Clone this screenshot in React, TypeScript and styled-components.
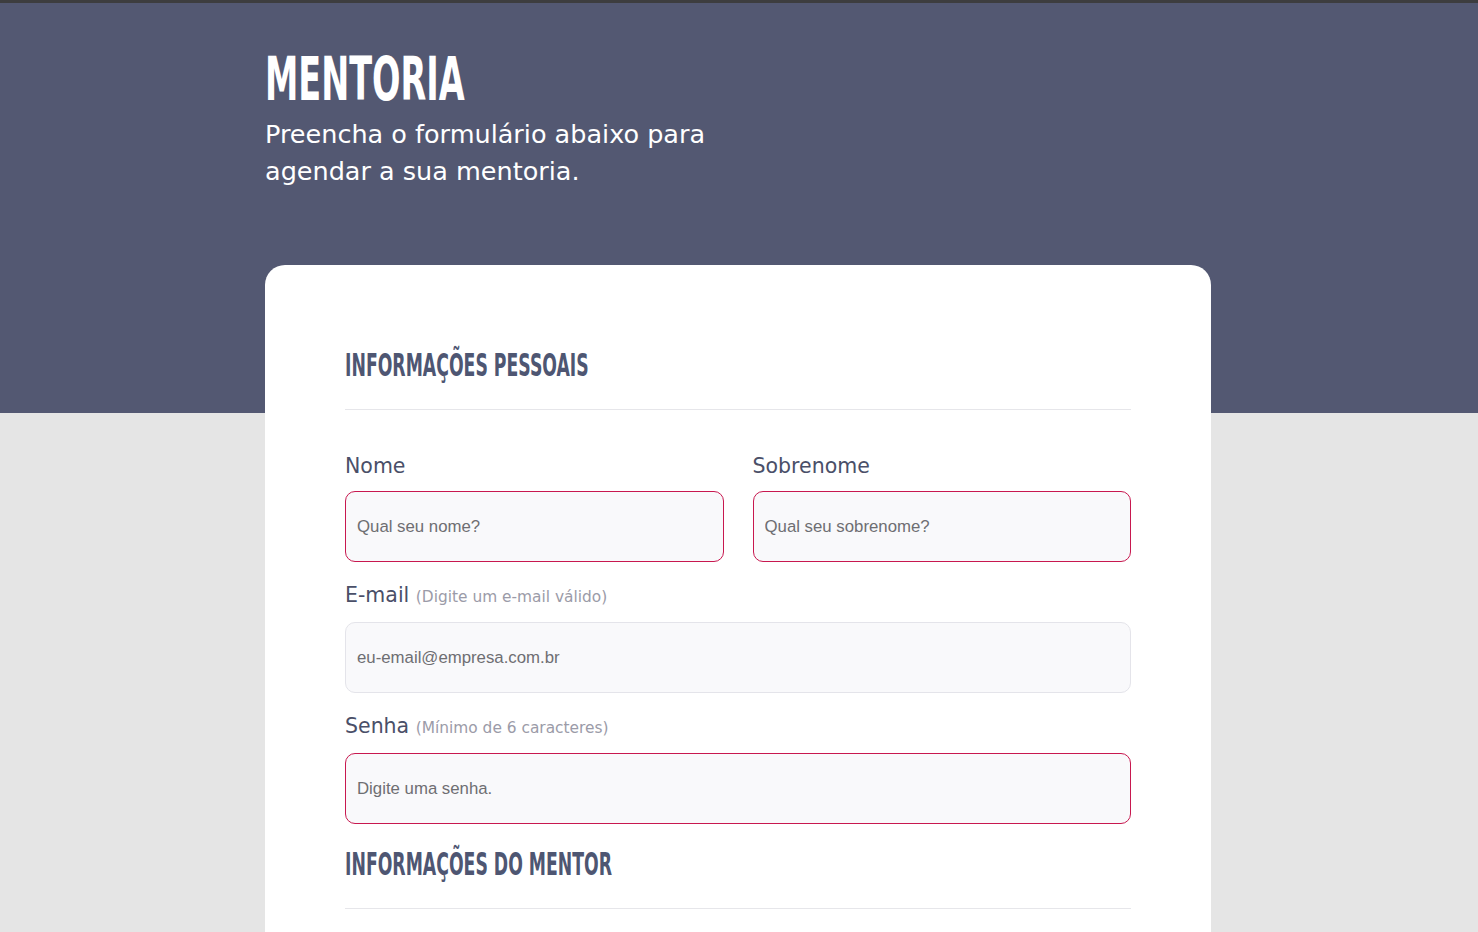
import * as React from "react";
import styled, { createGlobalStyle } from "styled-components";

const GlobalStyle = createGlobalStyle`
  html, body {
    margin: 0;
    padding: 0;
  }
  body {
    background: linear-gradient(#535872 0, #535872 413px, #e5e5e5 413px);
    border-top: 3px solid #3d3d3f;
    min-height: 100vh;
    box-sizing: border-box;
    font-family: "DejaVu Sans", "Open Sans", sans-serif;
  }
`;

const fields = [
  { label: "E-mail", hint: "(Digite um e-mail válido)", placeholder: "eu-email@empresa.com.br", error: false, type: "email" },
  { label: "Senha", hint: "(Mínimo de 6 caracteres)", placeholder: "Digite uma senha.", error: true, type: "password" },
];

export default function App() {
  return (
    <>
      <GlobalStyle />
      <Page>
        <Hero>
          <Title>MENTORIA</Title>
          <Subtitle>
            Preencha o formulário abaixo para
            <br />
            agendar a sua mentoria.
          </Subtitle>
        </Hero>
        <Card>
          <SectionTitle>INFORMAÇÕES PESSOAIS</SectionTitle>
          <Divider />
          <Row>
            <Field>
              <Label>Nome</Label>
              <Input placeholder="Qual seu nome?" $error />
            </Field>
            <Field>
              <Label>Sobrenome</Label>
              <Input placeholder="Qual seu sobrenome?" $error />
            </Field>
          </Row>
          {fields.map((f) => (
            <Field key={f.label}>
              <Label>
                {f.label} <Hint>{f.hint}</Hint>
              </Label>
              <Input type={f.type} placeholder={f.placeholder} $error={f.error} />
            </Field>
          ))}
          <SectionTitle>INFORMAÇÕES DO MENTOR</SectionTitle>
          <Divider />
        </Card>
      </Page>
    </>
  );
}

const Page = styled.div`
  width: 946px;
  margin-left: calc(50% - 474px);
  padding-top: 45px;
`;

const Hero = styled.header`
  height: 217px;
`;

const Title = styled.h1`
  margin: 0;
  font-family: "DejaVu Sans Condensed", "Liberation Sans Narrow", sans-serif;
  font-weight: 700;
  font-size: 61px;
  line-height: 62px;
  color: #ffffff;
  transform: scaleX(0.61);
  transform-origin: left center;
`;

const Subtitle = styled.p`
  margin: 6px 0 0;
  font-size: 25.5px;
  line-height: 37px;
  color: #ffffff;
`;

const Card = styled.main`
  background: #ffffff;
  border-radius: 20px 20px 0 0;
  padding: 80px 80px 0;
  min-height: 700px;
  display: flex;
  flex-direction: column;
`;

const SectionTitle = styled.h2`
  margin: 0;
  font-family: "DejaVu Sans Condensed", "Liberation Sans Narrow", sans-serif;
  font-weight: 700;
  font-size: 32px;
  line-height: 40px;
  color: #4e5672;
  transform: scaleX(0.6);
  transform-origin: left center;
`;

const Divider = styled.hr`
  border: 0;
  border-top: 1px solid #e6e6ea;
  margin: 24px 0 43px;
`;

const Row = styled.div`
  display: grid;
  grid-template-columns: 1fr 1fr;
  column-gap: 29px;
`;

const Field = styled.label`
  display: flex;
  flex-direction: column;
  margin-bottom: 20px;
`;

const Label = styled.span`
  font-size: 20.5px;
  line-height: 26px;
  color: #4a4f68;
  margin-bottom: 12px;
`;

const Hint = styled.span`
  font-size: 15.4px;
  color: #9b9ba8;
`;

const Input = styled.input<{ $error?: boolean }>`
  box-sizing: border-box;
  height: 71px;
  padding: 0 11px;
  border-radius: 10px;
  border: 1px solid ${(p) => (p.$error ? "#c8184f" : "#e4e4ea")};
  background: #f9f9fb;
  font-family: "Liberation Sans", Arial, sans-serif;
  font-size: 16.8px;
  color: #333;
  outline: none;

  &::placeholder {
    color: #6e6e72;
  }
`;
